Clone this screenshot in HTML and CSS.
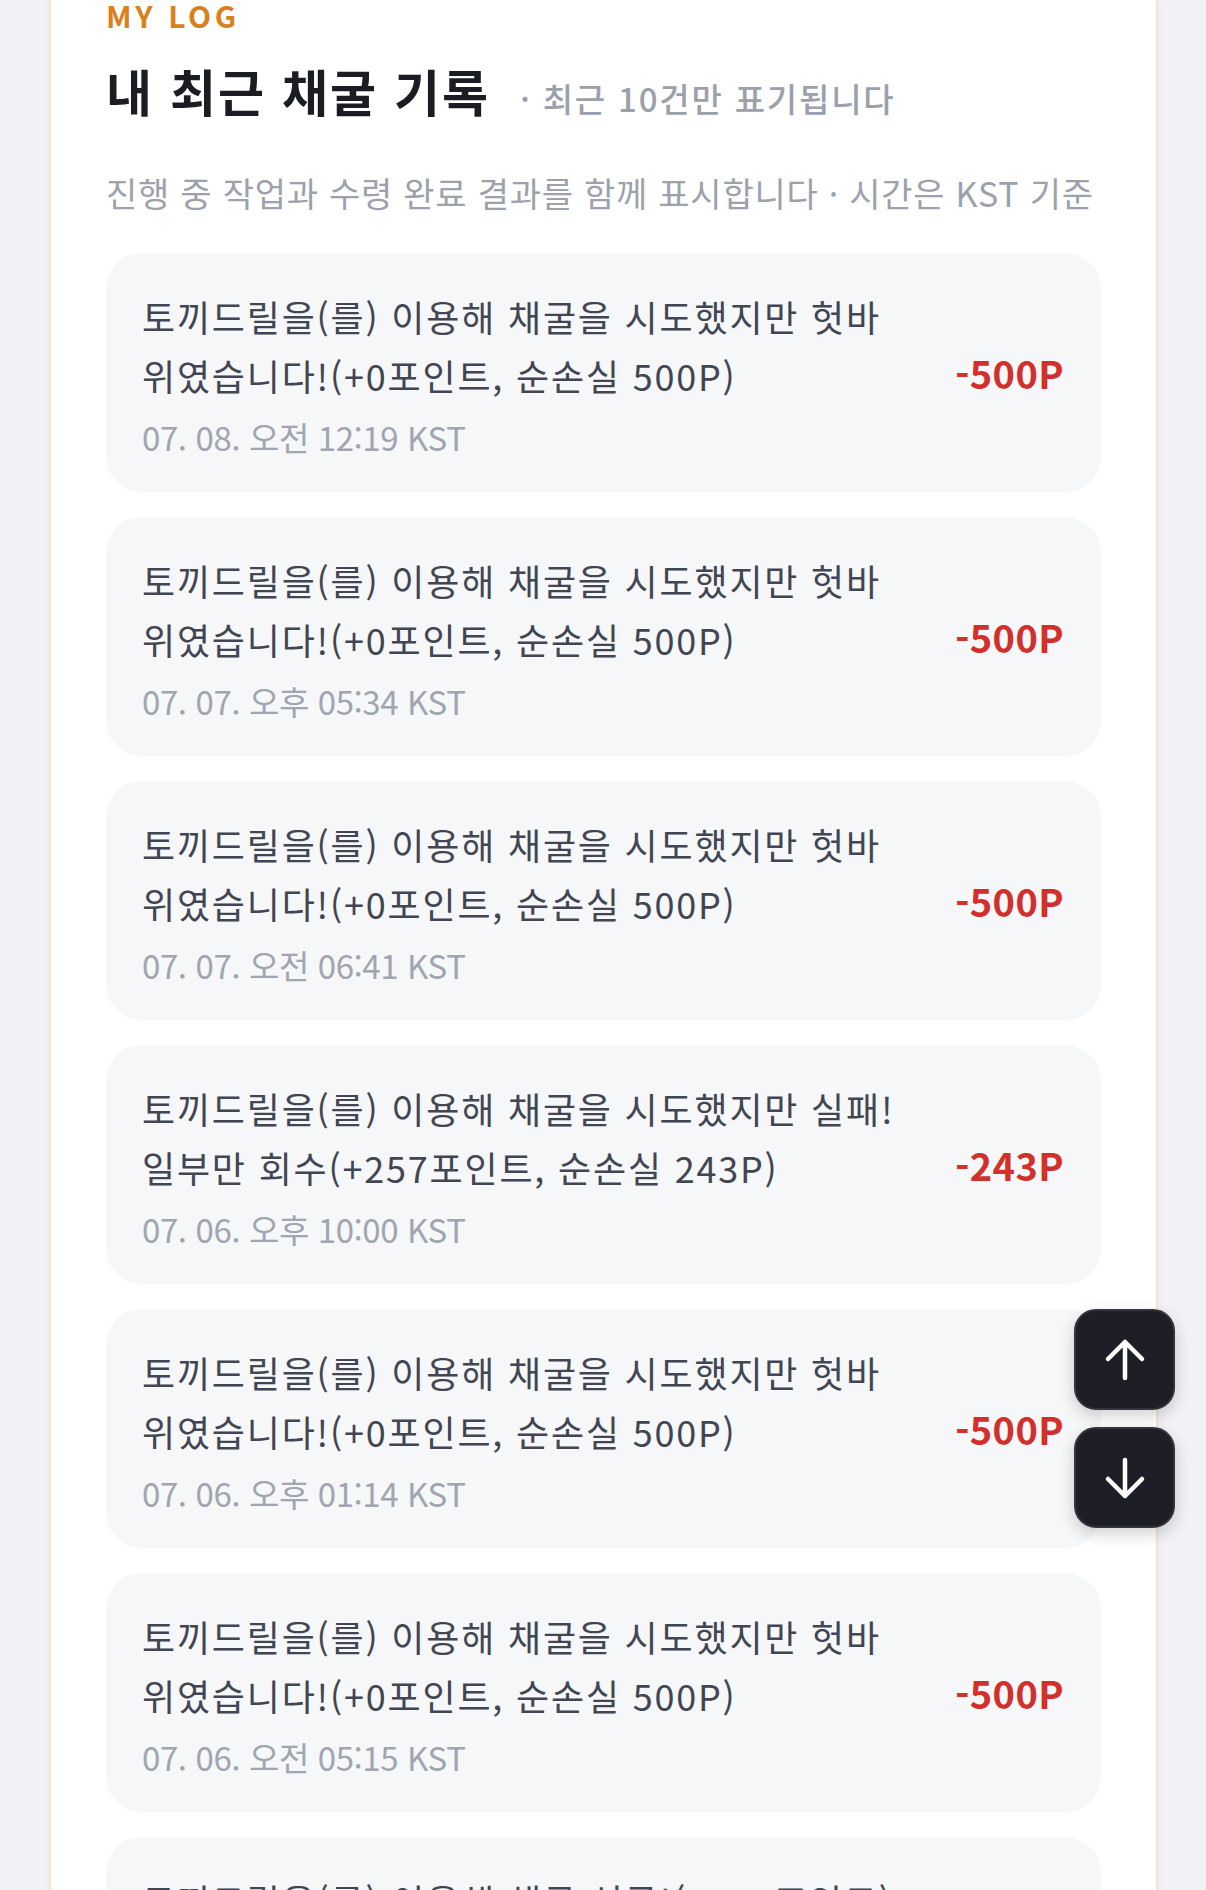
FILE: index.html
```
<!DOCTYPE html>
<html lang="ko">
<head>
<meta charset="utf-8">
<title>MY LOG</title>
<link rel="stylesheet" href="styles.css">
</head>
<body>
<main class="page">
  <section class="card">
    <div class="eyebrow">MY LOG</div>
    <div class="title-row">
      <h1 class="title">내 최근 채굴 기록</h1>
      <span class="subtitle">· 최근 10건만 표기됩니다</span>
    </div>
    <p class="desc">진행 중 작업과 수령 완료 결과를 함께 표시합니다 · 시간은 KST 기준</p>
    <ul class="log-list">
      <li class="log-item">
        <div class="log-body">
          <div class="log-text">토끼드릴을(를) 이용해 채굴을 시도했지만 헛바위였습니다!(+0포인트, 순손실 500P)</div>
          <div class="log-time">07. 08. 오전 12:19 KST</div>
        </div>
        <div class="log-amount loss">-500P</div>
      </li>
      <li class="log-item">
        <div class="log-body">
          <div class="log-text">토끼드릴을(를) 이용해 채굴을 시도했지만 헛바위였습니다!(+0포인트, 순손실 500P)</div>
          <div class="log-time">07. 07. 오후 05:34 KST</div>
        </div>
        <div class="log-amount loss">-500P</div>
      </li>
      <li class="log-item">
        <div class="log-body">
          <div class="log-text">토끼드릴을(를) 이용해 채굴을 시도했지만 헛바위였습니다!(+0포인트, 순손실 500P)</div>
          <div class="log-time">07. 07. 오전 06:41 KST</div>
        </div>
        <div class="log-amount loss">-500P</div>
      </li>
      <li class="log-item">
        <div class="log-body">
          <div class="log-text">토끼드릴을(를) 이용해 채굴을 시도했지만 실패! 일부만 회수(+257포인트, 순손실 243P)</div>
          <div class="log-time">07. 06. 오후 10:00 KST</div>
        </div>
        <div class="log-amount loss">-243P</div>
      </li>
      <li class="log-item">
        <div class="log-body">
          <div class="log-text">토끼드릴을(를) 이용해 채굴을 시도했지만 헛바위였습니다!(+0포인트, 순손실 500P)</div>
          <div class="log-time">07. 06. 오후 01:14 KST</div>
        </div>
        <div class="log-amount loss">-500P</div>
      </li>
      <li class="log-item">
        <div class="log-body">
          <div class="log-text">토끼드릴을(를) 이용해 채굴을 시도했지만 헛바위였습니다!(+0포인트, 순손실 500P)</div>
          <div class="log-time">07. 06. 오전 05:15 KST</div>
        </div>
        <div class="log-amount loss">-500P</div>
      </li>
      <li class="log-item">
        <div class="log-body">
          <div class="log-text">토끼드릴을(를) 이용해 채굴 성공!(+770포인트)</div>
          <div class="log-time">07. 05. 오후 11:02 KST</div>
        </div>
        <div class="log-amount gain">+270P</div>
      </li>
    </ul>
  </section>
</main>
<div class="scroll-btns">
  <button class="scroll-btn" aria-label="맨 위로">
    <svg viewBox="0 0 44 44" width="44" height="44"><path d="M22 40V4M5 21L22 4L39 21" fill="none" stroke="#fff" stroke-width="4.5" stroke-linecap="round" stroke-linejoin="round"/></svg>
  </button>
  <button class="scroll-btn" aria-label="맨 아래로">
    <svg viewBox="0 0 44 44" width="44" height="44"><path d="M22 4V40M5 23L22 40L39 23" fill="none" stroke="#fff" stroke-width="4.5" stroke-linecap="round" stroke-linejoin="round"/></svg>
  </button>
</div>
</body>
</html>
```
FILE: styles.css
```
* { box-sizing: border-box; }
html, body {
  margin: 0;
  padding: 0;
  background: #f1f2f5;
  font-family: "Noto Sans CJK KR", "Noto Sans", sans-serif;
}
.page {
  padding: 0 48px 0 49px;
}
.card {
  background: #ffffff;
  border-left: 2px solid #f6e5cd;
  border-right: 2px solid #f6e5cd;
  padding: 0 55px 40px 55px;
  box-shadow: 0 0 12px rgba(40, 40, 60, 0.03);
}
.eyebrow {
  font-size: 30px;
  line-height: 30px;
  font-weight: 700;
  letter-spacing: 0.12em;
  color: #d9811c;
}
.title-row {
  display: flex;
  align-items: baseline;
  gap: 30px;
  margin-top: 28px;
}
.title {
  margin: 0;
  font-size: 50px;
  line-height: 65px;
  font-weight: 700;
  letter-spacing: 2px;
  color: #1b1d23;
}
.subtitle {
  font-size: 33px;
  font-weight: 500;
  letter-spacing: 1.8px;
  color: #9ba0ab;
}
.desc {
  margin: 44px 0 0 0;
  font-size: 34px;
  line-height: 51px;
  letter-spacing: 0.75px;
  color: #9ca1ab;
}
.log-list {
  list-style: none;
  margin: 35px 0 0 0;
  padding: 0;
  display: flex;
  flex-direction: column;
  gap: 25px;
}
.log-item {
  background: #f6f7f9;
  border-radius: 36px;
  padding: 34px 37px 34px 36px;
  display: flex;
  align-items: center;
  gap: 48px;
}
.log-body {
  flex: 1;
  min-width: 0;
}
.log-text {
  font-size: 36px;
  line-height: 59px;
  letter-spacing: 1.8px;
  color: #414652;
}
.log-time {
  margin-top: 11px;
  font-size: 33px;
  line-height: 42px;
  letter-spacing: -0.4px;
  color: #a0a5b0;
}
.log-amount {
  font-size: 38px;
  font-weight: 700;
  letter-spacing: 0.4px;
  white-space: nowrap;
}
.loss { color: #d1302c; }
.gain { color: #1f9d55; }
.scroll-btns {
  position: fixed;
  right: 31px;
  bottom: 362px;
  display: flex;
  flex-direction: column;
  gap: 17px;
}
.scroll-btn {
  width: 101px;
  height: 101px;
  border-radius: 22px;
  background: #1e1f26;
  border: 2px solid #33343c;
  box-shadow: 0 6px 16px rgba(0, 0, 0, 0.18);
  display: flex;
  align-items: center;
  justify-content: center;
  padding: 0;
}
```
